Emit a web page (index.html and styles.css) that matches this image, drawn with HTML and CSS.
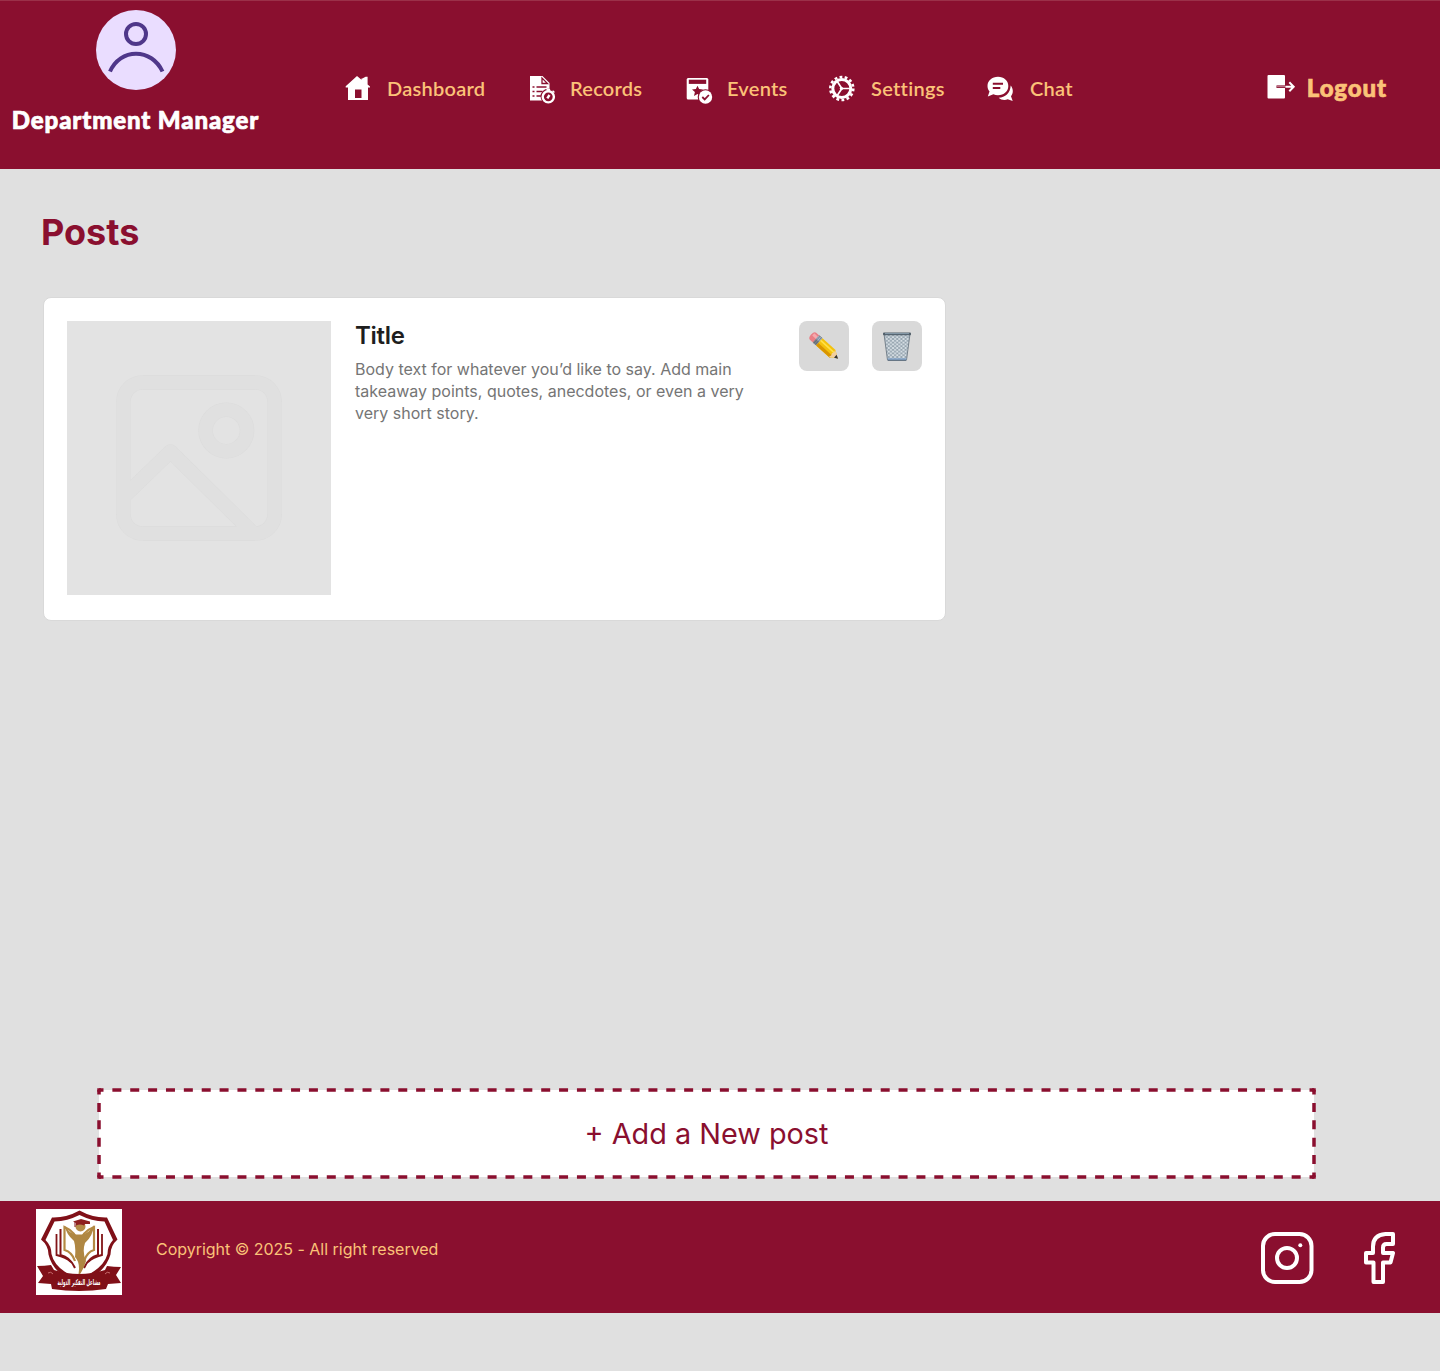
FILE: index.html
```html
<!DOCTYPE html>
<html lang="en">
<head>
<meta charset="utf-8">
<title>Department Manager - Posts</title>
<link rel="stylesheet" href="styles.css">
</head>
<body>
<header class="header">
  <div class="profile">
    <svg class="avatar" viewBox="0 0 80 80" fill="none" stroke="#4f378a" stroke-width="4">
      <circle cx="40" cy="40" r="40" fill="#eaddff" stroke="none"/>
      <circle cx="40" cy="24" r="10"/>
      <path d="M14 61.500C19 50 29 43.700 40 43.700S61 50 66.500 61.500"/>
    </svg>
    <span class="role">Department Manager</span>
  </div>
  <nav class="nav">
    <a class="nav-item dashboard">
      <svg viewBox="0 0 28 28" fill="#fff"><path d="M1.700 12.200 13 2l4.500 3.800V4.600h.8l3.300-1.800h2v7.800L26 12.600v.9h-2V26H4V13.500H1.700z"/><path d="M11 15.500h6.500V24H11z" fill="#8a0f2f"/></svg>
      <span>Dashboard</span>
    </a>
    <a class="nav-item records">
      <svg viewBox="0 0 28 28" fill="#fff"><path d="M2 2h12.500l7 7v17.500H2z"/><path d="M14 4v5.500h5.500z" stroke="#8a0f2f" stroke-width="1.300" fill="#fff"/><path d="M4.500 13h2m2 0h10M4.500 17.500h2m2 0h6M4.500 22h2m2 0h5" stroke="#8a0f2f" stroke-width="1.500"/><circle cx="20.300" cy="22.500" r="7.800" fill="#8a0f2f"/><circle cx="20.300" cy="22.800" r="5.600" stroke="#fff" stroke-width="2.400" fill="#8a0f2f"/><path d="m19.300 24.300 2.200-3.300" stroke="#fff" stroke-width="2.400"/><path d="M18.500 14.900h3.600v2h-3.600z"/><path d="m24.600 16.700 1.800 1.800" stroke="#fff" stroke-width="1.500"/></svg>
      <span>Records</span>
    </a>
    <a class="nav-item events">
      <svg viewBox="0 0 28 28" fill="#fff"><rect x="1.700" y="4" width="21.600" height="21.600" rx="1.500"/><path d="M3.800 5.700h17.400v4.200H3.800z" fill="#8a0f2f"/><path d="m12.500 11.700 1.600 3.400 3.800.4-2.800 2.600.8 3.800-3.400-1.900L9 22l.9-3.900L7 15.500l3.900-.4z" fill="#8a0f2f"/><circle cx="20.500" cy="23" r="7.800" fill="#8a0f2f"/><circle cx="20.500" cy="23" r="6.700"/><path d="m17.300 23 2.400 2.400 4.200-4.400" fill="none" stroke="#8a0f2f" stroke-width="1.800"/></svg>
      <span>Events</span>
    </a>
    <a class="nav-item settings">
      <svg viewBox="0 0 28 28" fill="none" stroke="#fff"><circle cx="13.800" cy="14.500" r="9" stroke-width="3"/><circle cx="13.800" cy="14.500" r="11.500" stroke-width="2.600" stroke-dasharray="2.800 2.360"/><path d="M15 14.500h8M13.500 14 9.300 7.500M13.500 15 9.300 21.500" stroke-width="1.700"/><circle cx="13.500" cy="14.500" r="1.700" fill="#fff" stroke="none"/></svg>
      <span>Settings</span>
    </a>
    <a class="nav-item chat">
      <svg viewBox="0 0 28 28" fill="#fff"><path d="M12 2.800c6 0 10.300 4 10.300 9.200S18 21.300 12 21.300c-1.700 0-3.200-.3-4.600-1l-5.600 2.200 1.700-4.900C2.200 16 1.500 14 1.500 12 1.500 6.800 6 2.800 12 2.800z"/><path d="M6.800 9.800H17M6.800 14h7.500" stroke="#8a0f2f" stroke-width="1.900"/><path d="M24.700 11.500c2.800 3.500 2.800 7.700.3 10.700l1.700 4.800-5-1.700c-3 1.200-6.700.7-9-1.600 6.500-.2 11.500-4.500 12-12.200z"/></svg>
      <span>Chat</span>
    </a>
  </nav>
  <a class="logout">
    <svg viewBox="0 0 28 26"><path d="M1.500 1h15.500q1 0 1 1v21.500q0 1-1 1H1.500q-1 0-1-1V2q0-1 1-1z" fill="#fff"/><path d="M9.500 12.700h9" stroke="#8a0f2f" stroke-width="2.600"/><path d="M18.500 12.700h8M22.300 8.200l4.400 4.500-4.400 4.500" fill="none" stroke="#fff" stroke-width="2"/><path d="M10 12.700h9" stroke="#fff" stroke-width=".5"/></svg>
    <span>Logout</span>
  </a>
</header>
<main class="main">
  <h1 class="heading">Posts</h1>
  <article class="card">
    <svg class="placeholder" viewBox="67 321 264 274" fill="none">
      <g class="edge"><rect x="123.500" y="382.500" width="151" height="151" rx="19"/><circle cx="226.300" cy="430.500" r="20.700"/><path d="M124 496.500 170.500 451.500 253 533" stroke-linejoin="round"/></g>
      <g class="band"><rect x="123.500" y="382.500" width="151" height="151" rx="19"/><circle cx="226.300" cy="430.500" r="20.700"/><path d="M124 496.500 170.500 451.500 253 533" stroke-linejoin="round"/></g>
    </svg>
    <div class="copy">
      <h2>Title</h2>
      <p>Body text for whatever you’d like to say. Add main takeaway points, quotes, anecdotes, or even a very very short story.</p>
    </div>
    <div class="actions">
      <button class="action" aria-label="Edit">
        <svg viewBox="0 0 50 50">
          <g transform="translate(14 15.200) rotate(42)">
            <path d="M0-4.700h4.500v9.400H0q-2.500-.2-2.500-4.700T0-4.700z" fill="#e97f86"/>
            <path d="M-1-3h5v3h-5z" fill="#f6a9ad"/>
            <path d="M4-4.800h4.500v9.600H4z" fill="#777e87"/><path d="M4-4.300h4.500V0H4z" fill="#a3b8cc"/><path d="M5.300-4.800v9.600M7.300-4.800v9.600" stroke="#59616c" stroke-width=".6"/>
            <path d="M8.500-4.800H26L33 0l-7 4.800H8.500z" fill="#f4c20d"/><path d="M8.500 1.500H27v3.300H8.500z" fill="#d99500"/><path d="M8.500-2.800H27v1.700H8.500z" fill="#ffe04a"/>
            <path d="m25.500-4.800 8 4.800-8 4.800 1-2.600-1-2.200 1-2.200z" fill="#f1cf9f"/><path d="m30-1.900 3.800 1.900-3.800 1.900z" fill="#333"/>
          </g>
        </svg>
      </button>
      <button class="action" aria-label="Delete">
        <svg viewBox="0 0 50 50">
          <defs><pattern id="mesh" width="4.200" height="3.600" patternUnits="userSpaceOnUse"><path d="M0 0l4.200 3.600M4.200 0 0 3.600" stroke="#758795" stroke-width=".65"/></pattern></defs>
          <path d="m12 13 3.500 26h19L38 13z" fill="#d6dee4"/><path d="m12 13 3.500 26h19L38 13z" fill="url(#mesh)" stroke="#6c7883" stroke-width=".9"/>
          <path d="M15.500 37.200h19l-.4 2.200H15.900z" fill="#86a5c8"/><path d="M15.800 39.300h18.400" stroke="#4c5965" stroke-width=".8"/>
          <rect x="11" y="11.500" width="28" height="2.700" rx="1" fill="#52606b"/><path d="M13 12.600h24" stroke="#98adbf" stroke-width=".8"/>
        </svg>
      </button>
    </div>
  </article>
  <button class="add">
    <svg class="dashes" viewBox="0 0 1219 91" fill="none" stroke="#8a0f2f" stroke-width="3.500">
      <path d="M2 2H1217M2 89H1217" stroke-dasharray="9 8.868" stroke-dashoffset="4.500"/>
      <path d="M2 2V89M1217 2V89" stroke-dasharray="9 8.400" stroke-dashoffset="4.500"/>
      <path d="M.25 2H4M.25 89H4M1215 2h3.750M1215 89h3.750"/>
    </svg>
    <span>+ Add a New post</span>
  </button>
</main>
<footer class="footer">
  <svg class="logo" viewBox="0 0 86 86">
    <path d="M0 0h86v86H0z" fill="#fff"/>
    <path d="M5 30.500 16 8.500Q30 9 43.500 1.500 57 9 71 8.500L81.500 30.500q-7 6-7 15-5 18-31 31Q17 65 12.500 45.500q0-9-7.500-15z" fill="#801018"/>
    <path d="M9.500 31 18.500 12.500q13-.5 25-6.500Q55.500 12 68.500 12.500L77 31q-5.500 6-5.500 14-4 15-28 25Q19 61 15.500 45q0-8-6-14z" fill="#fff"/>
    <g fill="none" stroke="#821417" stroke-width="2"><path d="M39 59Q34 48 24.500 46V20"/><path d="M48 59q5-11 14-13V20"/><path d="M35 53Q30 48 20.500 46V25M52 53q5-5 14-7V25" stroke-width="1.800"/></g>
    <path d="M39 52Q36 43 28.500 41V18q12 5 14.500 18 2-13 15-18v23q-7 2-10 11" fill="none" stroke="#b48a43" stroke-width="2.200"/>
    <path d="M29 17q5 8 11 8.500h7Q53 24 58 16q-1 11-9 18-3 9 1 18-2 8-8 16 3-14-3-20 1-10-1-16-8-7-9-15z" fill="#af8742"/>
    <circle cx="44.500" cy="17.500" r="5" fill="#b58c48"/><path d="m37 12.500 8-2.500 9 2.500v2.500h-5l-1 1.500q-4-2-8 0V14z" fill="#8e2020"/><path d="M39 13v5" stroke="#801018"/>
    <path d="M1 57q8 0 14-1l3 5q25 8 51 0l2-4q7 1 14 1l-5 8 5 8-13 1-2 5q-27 4-54 0l-1-5-13-1 5-7z" fill="#801018"/>
    <path d="M12 64q3-2 5 1M69 65q2-3 5-1" stroke="#c66c6c" fill="none"/>
    <text x="43" y="75.500" class="logo-text" textLength="43" lengthAdjust="spacingAndGlyphs">مشاعل التفكير الدولية</text>
  </svg>
  <p class="copyright">Copyright © 2025 - All right reserved</p>
  <div class="social">
    <svg class="instagram" viewBox="0 0 54 54" fill="none" stroke="#fff" stroke-width="4"><rect x="3" y="3" width="48.500" height="48" rx="12"/><circle cx="27" cy="27" r="10"/><circle cx="40.300" cy="14.300" r="2" fill="#fff" stroke="none"/></svg>
    <svg class="facebook" viewBox="0 0 34 54" fill="none" stroke="#fff" stroke-width="4" stroke-linejoin="round"><path d="M31 3h-7.500Q11 4 11 15.500V22H4v9.500h7.500V51h9.500V31.500h7.500L31 22H21v-5.500q0-3.500 3.500-3.500H31z"/></svg>
  </div>
</footer>
</body>
</html>
```
FILE: styles.css
```css
* { box-sizing: border-box; }
body {
  margin: 0;
  min-height: 1371px;
  background: #e0e0e0;
  font-family: Inter, sans-serif;
}
h1, h2, p { margin: 0; }
svg { display: block; flex: none; overflow: visible; }
button { border: 0; padding: 0; font: inherit; }

.header {
  height: 169px;
  background: #8a0f2f;
  border-top: 1px solid #9b3049;
  display: flex;
  font-family: Lato, sans-serif;
  color: #fbc278;
}
.profile {
  width: 271px;
  padding-top: 9px;
  display: flex;
  flex-direction: column;
  align-items: center;
}
.avatar { width: 80px; height: 80px; }
.role {
  margin-top: 14px;
  font-size: 24px;
  line-height: 32px;
  font-weight: 900;
  letter-spacing: .88px;
  -webkit-text-stroke: .7px #fff;
  color: #fff;
  white-space: nowrap;
}
.nav {
  padding: 73px 0 0 73px;
  display: flex;
  align-items: flex-start;
}
.nav-item {
  display: flex;
  align-items: center;
  gap: 15px;
  font-size: 20px;
  font-weight: 600;
  line-height: 28px;
  letter-spacing: .25px;
}
.nav-item svg { width: 28px; height: 28px; }
.dashboard { width: 184px; }
.records { width: 157px; gap: 14px; }
.events { width: 143px; gap: 14px; }
.settings { width: 158px; letter-spacing: .3px; }
.chat { gap: 16px; }
.logout {
  margin: 73px 53px 0 auto;
  display: flex;
  align-items: flex-start;
  gap: 12px;
  font-size: 24px;
  line-height: 28px;
  font-weight: 900;
  letter-spacing: .9px;
  -webkit-text-stroke: .7px #fbc278;
}
.logout svg { width: 28px; height: 26px; }

.main { height: 1032px; padding: 42px 0 0 41px; }
.heading { font-size: 36px; line-height: 42px; font-weight: 700; color: #8a0f2f; }
.card {
  margin: 44px 0 0 2px;
  width: 903px;
  height: 324px;
  padding: 23px;
  border: 1px solid #d9d9d9;
  border-radius: 8px;
  background: #fff;
  display: flex;
}
.placeholder { width: 264px; height: 274px; background: #e3e3e3; }
.edge { stroke: #dcdcdc; stroke-width: 14.6px; }
.band { stroke: #e0e0e0; stroke-width: 13.6px; }
.copy { width: 396px; margin-left: 24px; }
.copy h2 { font-size: 24px; line-height: 29px; font-weight: 600; letter-spacing: -.3px; color: #1e1e1e; }
.copy p { margin-top: 8px; font-size: 16px; line-height: 22px; color: #757575; }
.actions { margin-left: auto; display: flex; gap: 23.5px; }
.action { width: 50px; height: 50px; border-radius: 8px; background: #d9d9d9; }
.add {
  position: relative;
  margin: 467px 0 0 56px;
  width: 1219px;
  height: 91px;
  padding: 2px;
  background: #fff content-box;
  font-size: 28.8px;
  color: #8a0f2f;
}
.dashes { position: absolute; inset: 0; width: 1219px; height: 91px; }

.footer { height: 112px; background: #8a0f2f; padding: 8px 44px 0 36px; display: flex; align-items: flex-start; }
.logo { width: 86px; height: 86px; }
.logo-text { font: bold 8px "DejaVu Sans", sans-serif; fill: #fff; text-anchor: middle; }
.copyright { margin: 30px 0 0 34px; font-size: 16px; line-height: 20px; letter-spacing: -.02px; color: #fbc278; }
.social { margin: 22px 0 0 auto; display: flex; gap: 48px; }
.instagram { width: 54px; height: 54px; }
.facebook { width: 34px; height: 54px; }
```
